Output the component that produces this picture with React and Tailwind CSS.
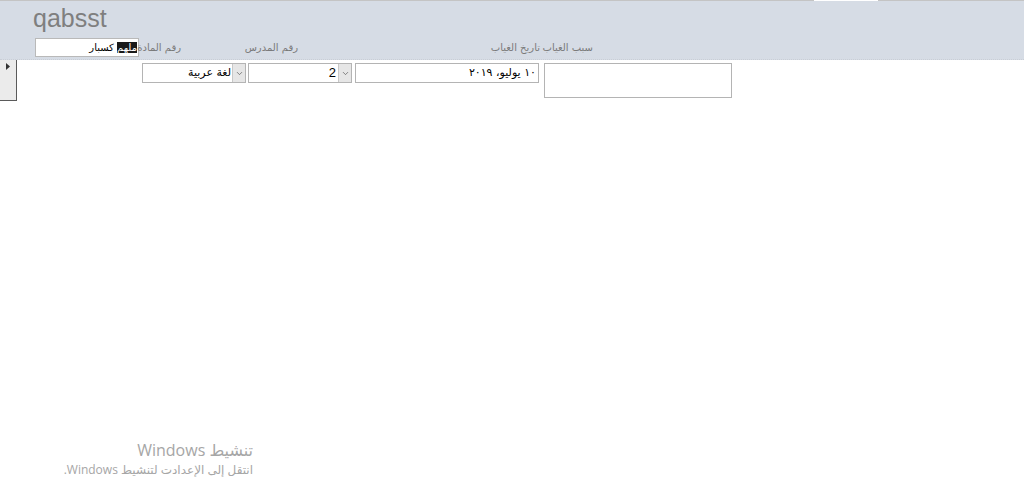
import { ChevronDown } from 'lucide-react';

const arabic = { fontFamily: '"DejaVu Sans", "Liberation Sans", sans-serif' };

const DropButton = () => (
    <div className="w-[13px] h-full flex items-center justify-center bg-[#e6e6e6] border-l border-[#c8c8c8]">
        <ChevronDown size={9} strokeWidth={1.75} className="text-[#505050]" />
    </div>
);

export default function App() {
    return (
        <div className="w-[1024px] h-[477px] bg-white overflow-hidden flex flex-col relative">
            {/* top border strip */}
            <div className="flex h-[1px]">
                <div className="w-[814px] bg-[#c4c4c4]" />
                <div className="w-[64px] bg-white" />
                <div className="flex-1 bg-[#c4c4c4]" />
            </div>

            {/* form header */}
            <div className="h-[59px] bg-[#d6dce5] border-b border-dotted border-[#c9ced6] flex flex-col">
                <div
                    className="pl-[33px] pt-[3px] h-[37px] text-[25px] leading-[28px] text-[#7f7f7f]"
                    style={{ fontFamily: '"Liberation Sans", Arial, sans-serif' }}
                >
                    qabsst
                </div>
                <div className="flex items-start text-[10px] text-[#7a7a7a]" style={arabic}>
                    <div className="ml-[35px] w-[104px] h-[19px] bg-white border border-[#b9b9b9] flex justify-end items-center pr-[1px]">
                        <div dir="rtl" className="text-[10px] text-black leading-[15px]">
                            <span className="bg-[#1a1a1a] text-white">ملهم</span>
                            <span> كسبار</span>
                        </div>
                    </div>
                    <div dir="rtl" className="ml-[4px] w-[38px] pt-[2px] text-right whitespace-nowrap">
                        رقم المادة
                    </div>
                    <div dir="rtl" className="ml-[69px] w-[48px] pt-[2px] text-right whitespace-nowrap">
                        رقم المدرس
                    </div>
                    <div dir="rtl" className="ml-[193px] w-[49px] pt-[2px] text-right whitespace-nowrap">
                        تاريخ الغياب
                    </div>
                    <div dir="rtl" className="ml-[6px] w-[47px] pt-[2px] text-right whitespace-nowrap">
                        سبب الغياب
                    </div>
                </div>
            </div>

            {/* detail row */}
            <div className="flex items-start">
                <div className="w-[17px] h-[41px] bg-[#ebebeb] border-r border-b border-[#5a5a5a] flex items-start pt-[3px] pl-[6px]">
                    <svg width="4" height="7" viewBox="0 0 4 7">
                        <path d="M0 0 L4 3.5 L0 7 Z" fill="#333" />
                    </svg>
                </div>
                <div className="ml-[125px] mt-[3px] flex items-start">
                    <div className="w-[104px] h-[20px] flex border border-[#b4b4b4] bg-white">
                        <div
                            dir="rtl"
                            className="flex-1 px-[1px] text-[11px] leading-[18px] text-black text-right"
                            style={arabic}
                        >
                            لغة عربية
                        </div>
                        <DropButton />
                    </div>
                    <div className="ml-[2px] w-[104px] h-[20px] flex border border-[#b4b4b4] bg-white">
                        <div
                            className="flex-1 pr-[2px] text-[13px] leading-[18px] text-black text-right"
                            style={{ fontFamily: '"Liberation Sans", Arial, sans-serif' }}
                        >
                            2
                        </div>
                        <DropButton />
                    </div>
                    <div
                        dir="rtl"
                        className="ml-[3px] w-[184px] h-[20px] border border-[#b4b4b4] bg-white text-[11px] leading-[18px] text-black pr-[2px]"
                        style={arabic}
                    >
                        ١٠ يوليو، ٢٠١٩
                    </div>
                    <div className="ml-[5px] w-[188px] h-[35px] border border-[#b4b4b4] bg-white" />
                </div>
            </div>

            {/* activation watermark */}
            <div
                dir="rtl"
                className="absolute left-[40px] top-[439px] w-[213px] text-[#a6a6a6]"
                style={{ fontFamily: '"Open Sans", "DejaVu Sans", sans-serif' }}
            >
                <div className="text-[16px] leading-[22px]">تنشيط Windows</div>
                <div className="text-[12px] leading-[17px] whitespace-nowrap">انتقل إلى الإعدادت لتنشيط Windows.</div>
            </div>
        </div>
    );
}
